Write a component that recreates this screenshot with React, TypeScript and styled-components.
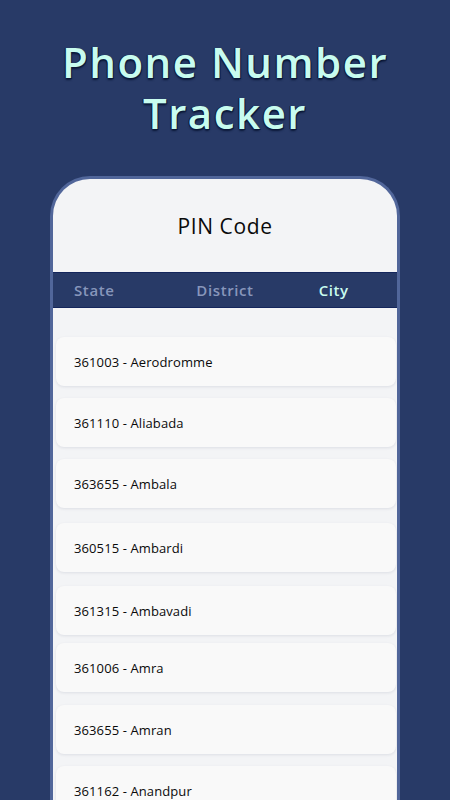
import { createGlobalStyle } from "styled-components";
import styled from "styled-components";

const GlobalStyle = createGlobalStyle`
  html, body {
    margin: 0;
    padding: 0;
    background: #283a67;
  }
  body {
    width: 450px;
    height: 800px;
    overflow: hidden;
    font-family: "Open Sans", "DejaVu Sans", sans-serif;
  }
`

const Page = styled.div`
  width: 450px;
  height: 800px;
  display: flex;
  flex-direction: column;
  align-items: center;
  background: #283a67;
  overflow: hidden;
`

const Title = styled.h1`
  margin: 0;
  padding-top: 36px;
  font-size: 42px;
  line-height: 51px;
  font-weight: 600;
  letter-spacing: 1.5px;
  text-align: center;
  color: #c8fcef;
  text-shadow: 1px 1px 0 #0b1838, -1px 0 0 #0b1838, 0 2px 2px #0b1838;
`

const Frame = styled.div`
  margin-top: 38px;
  width: 344px;
  flex: 1;
  display: flex;
  flex-direction: column;
  background: #f3f4f6;
  border: 3px solid #51669a;
  border-bottom: none;
  border-radius: 40px 40px 0 0;
  overflow: hidden;
`

const Header = styled.div`
  height: 93px;
  flex-shrink: 0;
  display: flex;
  align-items: center;
  justify-content: center;
  font-size: 21px;
  font-weight: 500;
  letter-spacing: 0.6px;
  color: #0a0a0a;
`

const TabBar = styled.div`
  height: 34px;
  flex-shrink: 0;
  display: grid;
  grid-template-columns: 1fr 1fr 1fr;
  align-items: center;
  background: #283a67;
  border-top: 1px solid #14265c;
  border-bottom: 1px solid #14265c;
`

const Tab = styled.div<{ $active?: boolean; $align: string; $left: number; $right: number }>`
  justify-self: ${(p) => p.$align};
  padding: 0 ${(p) => p.$right}px 0 ${(p) => p.$left}px;
  font-size: 15px;
  font-weight: 600;
  letter-spacing: 0.6px;
  color: ${(p) => (p.$active ? "#c8fcef" : "#8796bb")};
`

const List = styled.div`
  display: flex;
  flex-direction: column;
  padding: 17px 1px 0 3px;
`

const Card = styled.div<{ $space: number }>`
  margin-top: ${(p) => p.$space}px;
  height: 49px;
  flex-shrink: 0;
  display: flex;
  align-items: center;
  padding-left: 18px;
  background: #f9f9f9;
  border-radius: 8px;
  box-shadow: 0 1px 3px rgba(30, 40, 80, 0.1);
  font-size: 13px;
  font-weight: 500;
  letter-spacing: 0.1px;
  color: #0a0a0a;
`

const rows = [
  { label: "361003 - Aerodromme", space: 12 },
  { label: "361110 - Aliabada", space: 12 },
  { label: "363655 - Ambala", space: 12 },
  { label: "360515 - Ambardi", space: 15 },
  { label: "361315 - Ambavadi", space: 14 },
  { label: "361006 - Amra", space: 8 },
  { label: "363655 - Amran", space: 13 },
  { label: "361162 - Anandpur", space: 12 },
]

export default function App() {
  return (
    <Page>
      <GlobalStyle />
      <Title>
        Phone Number
        <br />
        Tracker
      </Title>
      <Frame>
        <Header>PIN Code</Header>
        <TabBar>
          <Tab $align="start" $left={21} $right={0}>State</Tab>
          <Tab $align="center" $left={0} $right={0}>District</Tab>
          <Tab $align="center" $left={0} $right={12} $active>City</Tab>
        </TabBar>
        <List>
          {rows.map((r) => (
            <Card key={r.label} $space={r.space}>{r.label}</Card>
          ))}
        </List>
      </Frame>
    </Page>
  )
}
